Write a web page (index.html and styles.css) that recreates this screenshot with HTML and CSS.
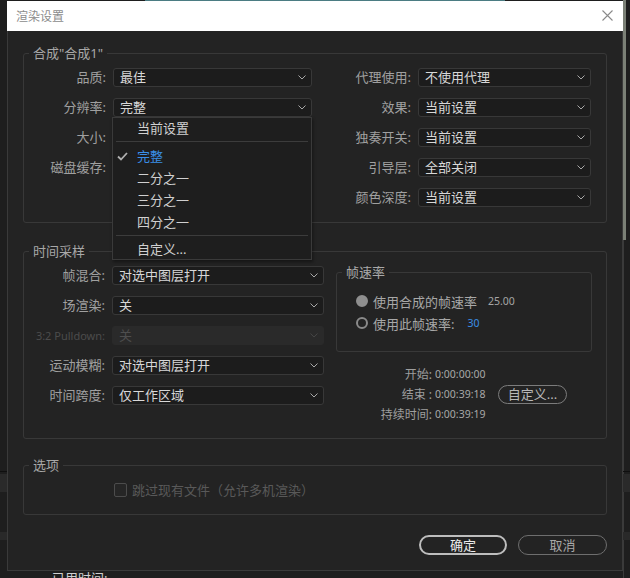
FILE: index.html
```html
<!DOCTYPE html>
<html lang="zh-CN">
<head>
<meta charset="utf-8">
<title>渲染设置</title>
<link rel="stylesheet" href="styles.css">
</head>
<body>
<div class="backdrop">
  <div class="bk bk-top"></div>
  <div class="bk bk-scroll"></div>
  <div class="bk bk-vline"></div>
  <div class="bk bk-hline"></div>
  <div class="bk bk-band1"></div>
  <div class="bk bk-band2"></div>
</div>

<div class="dialog">
  <div class="titlebar">
    <span class="title">渲染设置</span>
    <svg class="close" width="11" height="11" viewBox="0 0 11 11"><path d="M0.5 0.5 L10.5 10.5 M10.5 0.5 L0.5 10.5" stroke="#8a8a8a" stroke-width="1.1" fill="none"/></svg>
  </div>

  <div class="body">
    <section class="group g1">
      <div class="legend">合成"合成1"</div>
      <div class="grid4">
        <span class="lbl">品质:</span>
        <div class="select"><span>最佳</span><svg class="chev" width="8" height="5" viewBox="0 0 8 5"><path d="M0.5 0.5 L4 4 L7.5 0.5" stroke="#a8a8a8" fill="none"/></svg></div>
        <span class="lbl">代理使用:</span>
        <div class="select"><span>不使用代理</span><svg class="chev" width="8" height="5" viewBox="0 0 8 5"><path d="M0.5 0.5 L4 4 L7.5 0.5" stroke="#a8a8a8" fill="none"/></svg></div>

        <span class="lbl">分辨率:</span>
        <div class="select open"><span>完整</span><svg class="chev" width="8" height="5" viewBox="0 0 8 5"><path d="M0.5 0.5 L4 4 L7.5 0.5" stroke="#a8a8a8" fill="none"/></svg>
          <div class="menu">
            <div class="item first">当前设置</div>
            <div class="sep"></div>
            <div class="item selected"><svg class="check" width="11" height="9" viewBox="0 0 11 9"><path d="M1 4.5 L4 7.5 L10 1" stroke="#b0b0b0" stroke-width="1.8" fill="none"/></svg>完整</div>
            <div class="item">二分之一</div>
            <div class="item">三分之一</div>
            <div class="item">四分之一</div>
            <div class="sep"></div>
            <div class="item last">自定义...</div>
          </div>
        </div>
        <span class="lbl">效果:</span>
        <div class="select"><span>当前设置</span><svg class="chev" width="8" height="5" viewBox="0 0 8 5"><path d="M0.5 0.5 L4 4 L7.5 0.5" stroke="#a8a8a8" fill="none"/></svg></div>

        <span class="lbl">大小:</span>
        <div class="empty"></div>
        <span class="lbl">独奏开关:</span>
        <div class="select"><span>当前设置</span><svg class="chev" width="8" height="5" viewBox="0 0 8 5"><path d="M0.5 0.5 L4 4 L7.5 0.5" stroke="#a8a8a8" fill="none"/></svg></div>

        <span class="lbl">磁盘缓存:</span>
        <div class="empty"></div>
        <span class="lbl">引导层:</span>
        <div class="select"><span>全部关闭</span><svg class="chev" width="8" height="5" viewBox="0 0 8 5"><path d="M0.5 0.5 L4 4 L7.5 0.5" stroke="#a8a8a8" fill="none"/></svg></div>

        <span class="lbl"></span>
        <div class="empty"></div>
        <span class="lbl">颜色深度:</span>
        <div class="select"><span>当前设置</span><svg class="chev" width="8" height="5" viewBox="0 0 8 5"><path d="M0.5 0.5 L4 4 L7.5 0.5" stroke="#a8a8a8" fill="none"/></svg></div>
      </div>
    </section>

    <section class="group g2">
      <div class="legend">时间采样</div>
      <div class="g2-content">
        <div class="grid2">
          <span class="lbl">帧混合:</span>
          <div class="select"><span>对选中图层打开</span><svg class="chev" width="8" height="5" viewBox="0 0 8 5"><path d="M0.5 0.5 L4 4 L7.5 0.5" stroke="#a8a8a8" fill="none"/></svg></div>
          <span class="lbl">场渲染:</span>
          <div class="select"><span>关</span><svg class="chev" width="8" height="5" viewBox="0 0 8 5"><path d="M0.5 0.5 L4 4 L7.5 0.5" stroke="#a8a8a8" fill="none"/></svg></div>
          <span class="lbl dim">3:2 Pulldown:</span>
          <div class="select disabled"><span>关</span><svg class="chev" width="8" height="5" viewBox="0 0 8 5"><path d="M0.5 0.5 L4 4 L7.5 0.5" stroke="#454545" fill="none"/></svg></div>
          <span class="lbl">运动模糊:</span>
          <div class="select"><span>对选中图层打开</span><svg class="chev" width="8" height="5" viewBox="0 0 8 5"><path d="M0.5 0.5 L4 4 L7.5 0.5" stroke="#a8a8a8" fill="none"/></svg></div>
          <span class="lbl">时间跨度:</span>
          <div class="select"><span>仅工作区域</span><svg class="chev" width="8" height="5" viewBox="0 0 8 5"><path d="M0.5 0.5 L4 4 L7.5 0.5" stroke="#a8a8a8" fill="none"/></svg></div>
        </div>

        <div class="rightcol">
          <div class="group sub">
            <div class="legend">帧速率</div>
            <div class="radio-row first">
              <span class="radio on"></span>
              <span class="rtext">使用合成的帧速率</span>
              <span class="num">25.00</span>
            </div>
            <div class="radio-row">
              <span class="radio"></span>
              <span class="rtext">使用此帧速率:</span>
              <span class="num blue">30</span>
            </div>
          </div>

          <div class="times">
            <span class="tlbl">开始:</span><span class="tval">0:00:00:00</span><span></span>
            <span class="tlbl">结束 :</span><span class="tval">0:00:39:18</span><button class="pill small">自定义...</button>
            <span class="tlbl">持续时间:</span><span class="tval">0:00:39:19</span><span></span>
          </div>
        </div>
      </div>
    </section>

    <section class="group g3">
      <div class="legend">选项</div>
      <div class="check-row">
        <span class="checkbox"></span>
        <span class="ctext">跳过现有文件（允许多机渲染）</span>
      </div>
    </section>

    <div class="buttons">
      <button class="pill ok">确定</button>
      <button class="pill cancel">取消</button>
    </div>
  </div>
</div>

<div class="below">已用时间:</div>
</body>
</html>
```

FILE: styles.css
```css
* { box-sizing: border-box; }

html, body {
  margin: 0;
  padding: 0;
}

body {
  width: 630px;
  height: 578px;
  overflow: hidden;
  background: #1e1e1e;
  font-family: "Noto Sans", "Noto Sans CJK SC", sans-serif;
  font-size: 13px;
  color: #a0a0a0;
  position: relative;
}

/* background windows behind the dialog */
.backdrop .bk { position: absolute; }
.bk-top { top: 0; left: 145px; width: 360px; height: 1px; background: #4b7c83; }
.bk-scroll { top: 0; left: 623px; width: 3px; height: 240px; background: #7b8076; }
.bk-vline { top: 240px; left: 623px; width: 1px; height: 338px; background: #3a3a3a; }
.bk-hline { top: 471px; left: 0; width: 630px; height: 1px; background: #0f0f0f; }
.bk-band1 { top: 474px; left: 0; width: 630px; height: 18px; background: #2a2a2a; }
.bk-band2 { top: 532px; left: 0; width: 630px; height: 8px; background: #292929; }

.dialog {
  position: relative;
  z-index: 1;
  margin: 1px 0 0 7px;
  width: 616px;
}

.titlebar {
  height: 30px;
  background: #ffffff;
  display: flex;
  align-items: center;
  justify-content: space-between;
  padding: 0 10px 0 9px;
}

.title {
  font-size: 12px;
  color: #8c8c8c;
}

.close { display: block; margin-top: -1px; }

.body {
  height: 540px;
  background: #232323;
  border: 1px solid #3a3a3a;
  border-top: none;
  padding: 22px 15px 0 15px;
}

.group {
  border: 1px solid #383838;
  border-radius: 3px;
}

.legend {
  width: fit-content;
  margin: -9px 0 0 5px;
  padding: 0 4px;
  height: 16px;
  line-height: 16px;
  background: #232323;
  color: #a8a8a8;
  font-size: 13px;
}

.g1 { padding-bottom: 15px; }

.grid4 {
  margin-top: 7px;
  display: grid;
  grid-template-columns: 82px 199px 92px 173px;
  grid-auto-rows: 19px;
  column-gap: 7px;
  row-gap: 11px;
}

.lbl {
  text-align: right;
  line-height: 19px;
  color: #a0a0a0;
  white-space: nowrap;
}

.lbl.dim {
  color: #4c4c4c;
  font-size: 11px;
}

.select {
  position: relative;
  height: 19px;
  background: #1c1c1c;
  border: 1px solid #383838;
  border-radius: 3px;
  display: flex;
  align-items: center;
  justify-content: space-between;
  padding: 0 5px 0 6px;
  color: #d8d8d8;
  line-height: 17px;
  white-space: nowrap;
}

.select .chev { display: block; flex: none; }

.select.disabled {
  background: #2a2a2a;
  border-color: #2a2a2a;
  color: #4e4e4e;
}

/* open dropdown menu */
.menu {
  position: absolute;
  z-index: 10;
  top: 18px;
  left: -2px;
  width: 200px;
  background: #1e1e1e;
  border: 1px solid #3a3a3a;
  box-shadow: 1px 2px 3px rgba(0, 0, 0, 0.4);
  color: #d0d0d0;
}

.menu .item {
  position: relative;
  height: 22px;
  line-height: 22px;
  padding-left: 24px;
}

.menu .item.first { height: 21px; line-height: 21px; }
.menu .item.last { height: 20px; line-height: 20px; }

.menu .item.selected { color: #3a8ee6; }

.menu .check {
  position: absolute;
  left: 4px;
  top: 7px;
}

.menu .sep {
  height: 1px;
  margin: 2px 3px 3px 3px;
  background: #3c3c3c;
}

/* time sampling */
.g2 {
  margin-top: 28px;
  padding-bottom: 14px;
}

.g2-content {
  margin-top: 7px;
  display: flex;
  align-items: flex-start;
}

.grid2 {
  display: grid;
  grid-template-columns: 81px 212px;
  grid-auto-rows: 19px;
  column-gap: 7px;
  row-gap: 11px;
}

.rightcol {
  margin-left: 12px;
  width: 256px;
  padding-top: 6px;
}

.sub {
  height: 80px;
}

.sub .legend { color: #a8a8a8; }

.radio-row {
  display: flex;
  align-items: center;
  height: 18px;
  margin-top: 4px;
  padding-left: 19px;
}

.radio-row.first { margin-top: 12px; }

.radio {
  width: 12px;
  height: 12px;
  border-radius: 50%;
  border: 2px solid #8a8a8a;
  flex: none;
}

.radio.on {
  background: #8f8f8f;
  border-color: #8f8f8f;
}

.rtext {
  margin-left: 5px;
  color: #a8a8a8;
}

.num {
  margin-left: 11px;
  font-size: 10.5px;
  color: #a5a5a5;
}

.radio-row .num.blue {
  margin-left: 13px;
  color: #3a8ee6;
}

.times {
  margin-top: 12px;
  display: grid;
  grid-template-columns: 96px 52px 69px;
  grid-auto-rows: 20px;
  column-gap: 3px;
  align-items: center;
}

.tlbl {
  text-align: right;
  font-size: 12px;
  color: #9e9e9e;
  white-space: nowrap;
}

.tval {
  font-size: 10.5px;
  color: #a8a8a8;
  white-space: nowrap;
}

.pill {
  font-family: "Noto Sans", "Noto Sans CJK SC", sans-serif;
  background: #232323;
  border-radius: 10px;
  padding: 0;
  cursor: default;
}

.pill.small {
  margin-left: 8px;
  width: 69px;
  height: 19px;
  border: 1.5px solid #7c7c7c;
  color: #b8b8b8;
  font-size: 13px;
  line-height: 15px;
}

/* options */
.g3 {
  margin-top: 26px;
  padding-bottom: 17px;
}

.check-row {
  margin: 10px 0 0 90px;
  display: flex;
  align-items: center;
  height: 14px;
}

.checkbox {
  width: 13px;
  height: 14px;
  border: 1.5px solid #4c4c4c;
  border-radius: 2px;
  background: #262626;
}

.ctext {
  margin-left: 5px;
  color: #595959;
  line-height: 14px;
}

.buttons {
  margin-top: 20px;
  display: flex;
  justify-content: flex-end;
  gap: 11px;
}

.pill.ok,
.pill.cancel {
  height: 20px;
  font-size: 13px;
  line-height: 16px;
}

.pill.ok {
  width: 88px;
  border: 2px solid #bdbdbd;
  color: #ececec;
}

.pill.cancel {
  width: 89px;
  border: 1.5px solid #6e6e6e;
  color: #a8a8a8;
}

.below {
  position: relative;
  z-index: 1;
  padding-left: 52px;
  line-height: 14px;
  font-size: 13px;
  color: #d0d0d0;
}
```
